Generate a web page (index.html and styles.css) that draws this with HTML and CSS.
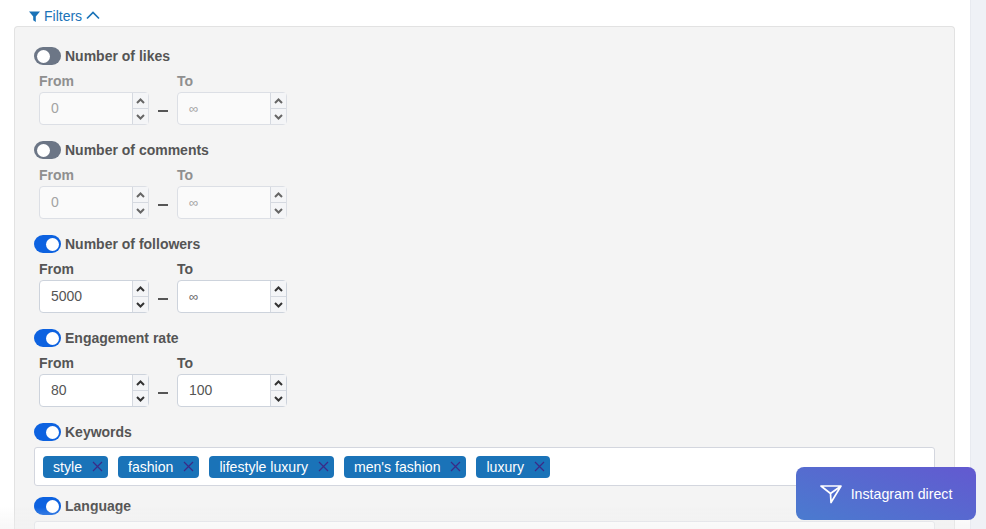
FILE: index.html

```html
<!DOCTYPE html>
<html lang="en">
<head>
  <meta charset="UTF-8" />
  <title>Filters</title>
  <link rel="stylesheet" href="styles.css">
</head>
<body>
  <main class="content">
    <a class="filters-link">
      <svg class="funnel" width="11" height="11" viewBox="0 0 11 11"><path d="M0 0.5h11L6.8 5.4V11L4.2 9.2V5.4z" fill="#1a73b8"/></svg>
      Filters
      <svg class="chevron" width="14" height="9" viewBox="0 0 14 9"><path d="M1 7.5L7 1.5l6 6" fill="none" stroke="#1a73b8" stroke-width="1.7"/></svg>
    </a>

    <section class="panel">
      <div class="filter off">
        <div class="filter-title"><span class="toggle"></span>Number of likes</div>
        <div class="range">
          <div class="field">
            <label>From</label>
            <div class="num"><span class="value">0</span><span class="spin"><i><svg width="9" height="6" viewBox="0 0 9 6"><path d="M1 5l3.5-3.5L8 5" /></svg></i><i><svg width="9" height="6" viewBox="0 0 9 6"><path d="M1 1l3.5 3.5L8 1" /></svg></i></span></div>
          </div>
          <span class="dash"></span>
          <div class="field">
            <label>To</label>
            <div class="num"><span class="value inf">∞</span><span class="spin"><i><svg width="9" height="6" viewBox="0 0 9 6"><path d="M1 5l3.5-3.5L8 5" /></svg></i><i><svg width="9" height="6" viewBox="0 0 9 6"><path d="M1 1l3.5 3.5L8 1" /></svg></i></span></div>
          </div>
        </div>
      </div>

      <div class="filter off">
        <div class="filter-title"><span class="toggle"></span>Number of comments</div>
        <div class="range">
          <div class="field">
            <label>From</label>
            <div class="num"><span class="value">0</span><span class="spin"><i><svg width="9" height="6" viewBox="0 0 9 6"><path d="M1 5l3.5-3.5L8 5" /></svg></i><i><svg width="9" height="6" viewBox="0 0 9 6"><path d="M1 1l3.5 3.5L8 1" /></svg></i></span></div>
          </div>
          <span class="dash"></span>
          <div class="field">
            <label>To</label>
            <div class="num"><span class="value inf">∞</span><span class="spin"><i><svg width="9" height="6" viewBox="0 0 9 6"><path d="M1 5l3.5-3.5L8 5" /></svg></i><i><svg width="9" height="6" viewBox="0 0 9 6"><path d="M1 1l3.5 3.5L8 1" /></svg></i></span></div>
          </div>
        </div>
      </div>

      <div class="filter">
        <div class="filter-title"><span class="toggle"></span>Number of followers</div>
        <div class="range">
          <div class="field">
            <label>From</label>
            <div class="num"><span class="value">5000</span><span class="spin"><i><svg width="9" height="6" viewBox="0 0 9 6"><path d="M1 5l3.5-3.5L8 5" /></svg></i><i><svg width="9" height="6" viewBox="0 0 9 6"><path d="M1 1l3.5 3.5L8 1" /></svg></i></span></div>
          </div>
          <span class="dash"></span>
          <div class="field">
            <label>To</label>
            <div class="num"><span class="value inf">∞</span><span class="spin"><i><svg width="9" height="6" viewBox="0 0 9 6"><path d="M1 5l3.5-3.5L8 5" /></svg></i><i><svg width="9" height="6" viewBox="0 0 9 6"><path d="M1 1l3.5 3.5L8 1" /></svg></i></span></div>
          </div>
        </div>
      </div>

      <div class="filter">
        <div class="filter-title"><span class="toggle"></span>Engagement rate</div>
        <div class="range">
          <div class="field">
            <label>From</label>
            <div class="num"><span class="value">80</span><span class="spin"><i><svg width="9" height="6" viewBox="0 0 9 6"><path d="M1 5l3.5-3.5L8 5" /></svg></i><i><svg width="9" height="6" viewBox="0 0 9 6"><path d="M1 1l3.5 3.5L8 1" /></svg></i></span></div>
          </div>
          <span class="dash"></span>
          <div class="field">
            <label>To</label>
            <div class="num"><span class="value">100</span><span class="spin"><i><svg width="9" height="6" viewBox="0 0 9 6"><path d="M1 5l3.5-3.5L8 5" /></svg></i><i><svg width="9" height="6" viewBox="0 0 9 6"><path d="M1 1l3.5 3.5L8 1" /></svg></i></span></div>
          </div>
        </div>
      </div>

      <div class="filter-title"><span class="toggle"></span>Keywords</div>
      <div class="tag-box">
        <span class="tag">style<svg width="11" height="11" viewBox="0 0 11 11"><path d="M1 1l9 9M10 1l-9 9"/></svg></span>
        <span class="tag">fashion<svg width="11" height="11" viewBox="0 0 11 11"><path d="M1 1l9 9M10 1l-9 9"/></svg></span>
        <span class="tag">lifestyle luxury<svg width="11" height="11" viewBox="0 0 11 11"><path d="M1 1l9 9M10 1l-9 9"/></svg></span>
        <span class="tag">men's fashion<svg width="11" height="11" viewBox="0 0 11 11"><path d="M1 1l9 9M10 1l-9 9"/></svg></span>
        <span class="tag">luxury<svg width="11" height="11" viewBox="0 0 11 11"><path d="M1 1l9 9M10 1l-9 9"/></svg></span>
      </div>

      <div class="filter-title language"><span class="toggle"></span>Language</div>
      <div class="select-box"></div>
    </section>
  </main>
  <aside class="sidebar"></aside>

  <div class="bottom-fade"></div>
  <button class="direct-btn">
    <svg width="22" height="20" viewBox="0 0 22 20"><path d="M1 2L21 2L11 18.5L10.5 9.5zM10.5 9.5L21 2" fill="none" stroke="#fff" stroke-width="1.7" stroke-linejoin="round"/></svg>
    Instagram direct
  </button>
</body>
</html>
```

FILE: styles.css

```css
html, body { height: 100%; }
body { margin: 0; display: flex; height: 529px; overflow: hidden; background: #fff; font-family: "Liberation Sans", Arial, sans-serif; color: #555; }

.content { width: 970px; height: 529px; flex: none; padding-left: 14px; box-sizing: border-box; overflow: hidden; }
.sidebar { flex: 1; background: #eff1f6; border-left: 1px solid #e8eaf0; }

.filters-link { display: flex; align-items: center; height: 26px; padding: 6px 0 0 15px; box-sizing: border-box; font-size: 14px; color: #1a73b8; }
.funnel { margin-right: 4px; margin-top: 1px; }
.chevron { margin-left: 4px; margin-top: -2px; }

.panel { width: 941px; height: 503px; box-sizing: border-box; padding: 20px 19px 0; overflow: hidden; background: #f4f4f4; border: 1px solid #e2e2e2; border-bottom: none; border-radius: 4px 4px 0 0; }

.filter { height: 94px; }
.filter-title { display: flex; align-items: center; height: 18px; font-size: 14px; font-weight: bold; color: #555; }

.toggle { position: relative; width: 27px; height: 18px; margin-right: 4px; border-radius: 9px; background: #0d62e0; }
.toggle::after { content: ""; position: absolute; top: 2.5px; right: 2.5px; width: 13px; height: 13px; border-radius: 50%; background: #fff; }
.off .toggle { background: #6c7686; }
.off .toggle::after { right: auto; left: 2.5px; }

.range { display: flex; margin: 8px 0 0 5px; }
.field { width: 110px; }
.field label { display: block; height: 19px; font-size: 14px; font-weight: bold; line-height: 16px; color: #555; }
.off .field label { color: #8f8f8f; }

.num { display: flex; height: 33px; box-sizing: border-box; background: #fff; border: 1px solid #cdd3dc; border-radius: 4px; }
.value { flex: 1; padding-left: 11px; font-size: 14px; line-height: 31px; color: #555; }
.value.inf { font-size: 13px; color: #666; }
.spin { display: flex; flex-direction: column; width: 15px; border-left: 1px solid #d5d9e0; }
.spin i { display: flex; flex: 1; align-items: center; justify-content: center; background: #f4f5f7; }
.spin i + i { border-top: 1px solid #d5d9e0; }
.spin path { fill: none; stroke: #333; stroke-width: 2; }
.off .num { background: #fafafa; border-color: #dcdfe5; }
.off .value { color: #a3a3a3; }
.off .spin path { stroke: #666; }

.dash { width: 10px; height: 2px; margin: 37px 9px 0 9px; background: #555; flex: none; }

.tag-box { display: flex; align-items: center; gap: 10px; width: 901px; height: 39px; margin-top: 6px; padding-left: 8px; box-sizing: border-box; background: #fff; border: 1px solid #d3d6de; border-radius: 3px; }
.tag { display: flex; align-items: center; height: 22px; padding: 0 5px 0 10px; background: #1a73b8; border-radius: 4px; color: #fff; font-size: 14.1px; }
.tag svg { margin-left: 10px; }
.tag path { fill: none; stroke: #3b2a87; stroke-width: 1.2; }

.language { margin-top: 11px; }
.select-box { width: 901px; height: 39px; margin-top: 6px; box-sizing: border-box; background: #fff; border: 1px solid #e0e2e8; border-radius: 3px; }

.bottom-fade { position: fixed; left: 0; bottom: 0; width: 970px; height: 22px; background: linear-gradient(rgba(244,244,244,0), rgba(240,240,240,0.5)); }

.direct-btn { position: fixed; left: 796px; top: 467px; width: 180px; height: 53px; display: flex; align-items: center; justify-content: center; gap: 9px; padding: 0; border: none; border-radius: 8px; background: linear-gradient(200deg, #6359d0, #4a7bcf); color: #fff; font-family: inherit; font-size: 14.2px; }
```
